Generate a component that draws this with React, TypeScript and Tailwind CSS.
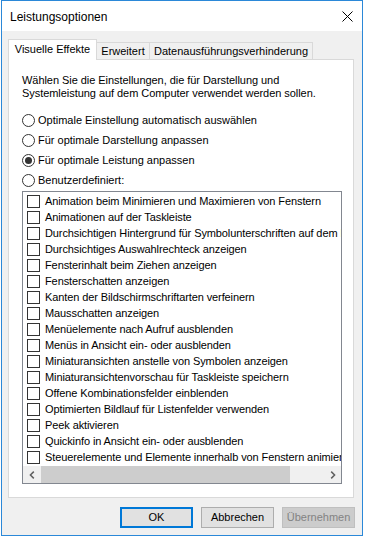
import type { ReactNode } from "react";

const effects = [
	"Animation beim Minimieren und Maximieren von Fenstern",
	"Animationen auf der Taskleiste",
	"Durchsichtigen Hintergrund für Symbolunterschriften auf dem Desktop",
	"Durchsichtiges Auswahlrechteck anzeigen",
	"Fensterinhalt beim Ziehen anzeigen",
	"Fensterschatten anzeigen",
	"Kanten der Bildschirmschriftarten verfeinern",
	"Mausschatten anzeigen",
	"Menüelemente nach Aufruf ausblenden",
	"Menüs in Ansicht ein- oder ausblenden",
	"Miniaturansichten anstelle von Symbolen anzeigen",
	"Miniaturansichtenvorschau für Taskleiste speichern",
	"Offene Kombinationsfelder einblenden",
	"Optimierten Bildlauf für Listenfelder verwenden",
	"Peek aktivieren",
	"Quickinfo in Ansicht ein- oder ausblenden",
	"Steuerelemente und Elemente innerhalb von Fenstern animieren",
];

const radios = [
	{ label: "Optimale Einstellung automatisch auswählen", checked: false },
	{ label: "Für optimale Darstellung anpassen", checked: false },
	{ label: "Für optimale Leistung anpassen", checked: true },
	{ label: "Benutzerdefiniert:", checked: false },
];

function Radio({ label, checked }: { label: string; checked: boolean }) {
	return (
		<div className="h-[20px] flex items-center gap-[3px]">
			<span className="w-[13px] h-[13px] rounded-full border border-[#333333] bg-white flex items-center justify-center shrink-0">
				{checked && <span className="w-[7px] h-[7px] rounded-full bg-[#333333]" />}
			</span>
			<span>{label}</span>
		</div>
	);
}

function Chevron({ dir }: { dir: "left" | "right" }) {
	return (
		<svg width="6" height="8" viewBox="0 0 6 8">
			<polyline
				points={dir === "left" ? "4.8,0.6 1.4,4 4.8,7.4" : "1.2,0.6 4.6,4 1.2,7.4"}
				fill="none"
				stroke="#606060"
				strokeWidth="1.5"
			/>
		</svg>
	);
}

function Button({
	children,
	variant = "normal",
}: { children: ReactNode; variant?: "default" | "normal" | "disabled" }) {
	const styles = {
		default: "bg-[#e1e1e1] border-2 border-[#0078d7] text-black",
		normal: "bg-[#e1e1e1] border border-[#adadad] text-black",
		disabled: "bg-[#cccccc] border border-[#bfbfbf] text-[#838383]",
	}[variant];
	return (
		<div className={`w-[73px] h-[21px] flex items-center justify-center ${styles}`}>
			{children}
		</div>
	);
}

export default function App() {
	return (
		<div className="w-[367px] h-[540px] bg-white text-black text-[11px] leading-[13px] font-['Segoe_UI','Liberation_Sans',Arial,sans-serif]">
			<div className="ml-px w-[362px] h-[536px] border border-[#2b88d8] bg-[#f0f0f0] flex flex-col">
				{/* title bar */}
				<div className="h-[30px] bg-white flex items-center justify-between pl-[8px] pr-[9px]">
					<span className="text-[12px] pt-[3px]">Leistungsoptionen</span>
					<svg width="11" height="11" viewBox="0 0 11 11">
						<path d="M0.5 0.5 L10.5 10.5 M10.5 0.5 L0.5 10.5" stroke="#000" strokeWidth="1" />
					</svg>
				</div>

				{/* tabs */}
				<div className="flex items-end mt-[8px] ml-[6px]">
					<div className="relative z-10 -mb-px w-[89px] h-[21px] bg-white border border-b-0 border-[#d9d9d9] flex items-center justify-center pb-[1px]">
						Visuelle Effekte
					</div>
					<div className="-ml-px w-[54px] h-[17px] bg-[#f0f0f0] border border-b-0 border-[#d9d9d9] flex items-center justify-center">
						Erweitert
					</div>
					<div className="-ml-px w-[164px] h-[17px] bg-[#f0f0f0] border border-b-0 border-[#d9d9d9] flex items-center justify-center">
						Datenausführungsverhinderung
					</div>
				</div>

				{/* panel */}
				<div className="ml-[6px] w-[346px] h-[439px] bg-white border border-[#d9d9d9] pt-[14px] pl-[13px]">
					<p className="tracking-[-0.05px]">
						Wählen Sie die Einstellungen, die für Darstellung und
						<br />
						Systemleistung auf dem Computer verwendet werden sollen.
					</p>

					<div className="mt-[10px] flex flex-col">
						{radios.map((r) => (
							<Radio key={r.label} label={r.label} checked={r.checked} />
						))}
					</div>

					<div className="mt-[1px] w-[320px] h-[293px] border border-[#828790] flex flex-col">
						<div className="pt-[1px] flex-1 overflow-hidden tracking-[-0.1px]">
							{effects.map((e) => (
								<div key={e} className="h-[16px] flex items-center pl-[4px] gap-[5px] whitespace-nowrap">
									<span className="w-[13px] h-[13px] border border-[#333333] bg-white shrink-0" />
									<span>{e}</span>
								</div>
							))}
						</div>
						{/* horizontal scrollbar */}
						<div className="h-[17px] flex bg-[#f0f0f0]">
							<div className="w-[17px] flex items-center justify-center">
								<Chevron dir="left" />
							</div>
							<div className="flex-1">
								<div className="ml-[1px] w-[249px] h-full bg-[#cdcdcd]" />
							</div>
							<div className="w-[17px] flex items-center justify-center">
								<Chevron dir="right" />
							</div>
						</div>
					</div>
				</div>

				{/* buttons */}
				<div className="mt-[9px] pr-[7px] flex justify-end gap-[8px]">
					<Button variant="default">OK</Button>
					<Button>Abbrechen</Button>
					<Button variant="disabled">Übernehmen</Button>
				</div>
			</div>
		</div>
	);
}
